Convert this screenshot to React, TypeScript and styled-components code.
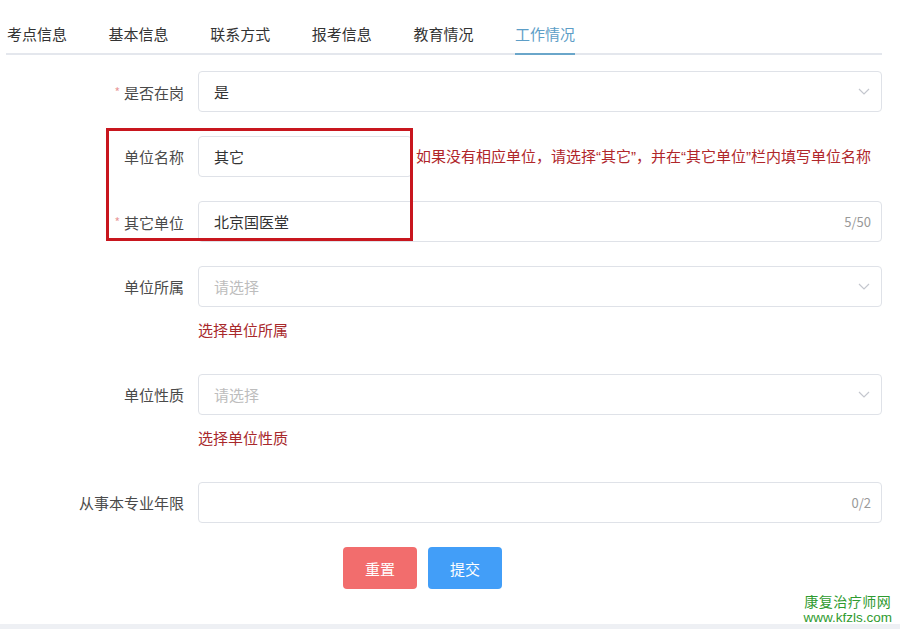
import React from 'react';
import styled, { createGlobalStyle } from 'styled-components';

const GlobalStyle = createGlobalStyle`
  html, body {
    margin: 0;
    padding: 0;
    background: #ffffff;
    font-family: "Noto Sans CJK SC", "Noto Sans", "Liberation Sans", sans-serif;
  }
`;

const Page = styled.div`
  position: relative;
  height: 629px;
  display: flex;
  flex-direction: column;
  overflow: hidden;
`;

const Main = styled.div`
  flex: 1;
  padding: 15px 18px 0 6px;
`;

const TabBar = styled.div`
  display: flex;
  border-bottom: 2px solid #e4e7ed;
`;

const Tab = styled.div`
  display: flex;
  height: 40px;
  padding: 0 20.8px;
  margin-bottom: -2px;

  &:first-child {
    padding-left: 1px;
  }
`;

const TabLabel = styled.div<{ active?: boolean }>`
  display: flex;
  align-items: center;
  padding-bottom: 2px;
  font-size: 15px;
  color: ${p => (p.active ? '#5d9ec7' : '#333')};
  border-bottom: 2px solid ${p => (p.active ? '#6aa6ca' : 'transparent')};
`;

const Form = styled.div`
  position: relative;
  margin-top: 16px;
`;

const FormItem = styled.div`
  display: flex;
  align-items: flex-start;
  margin-bottom: 24px;
`;

const Label = styled.div`
  width: 192px;
  flex-shrink: 0;
  box-sizing: border-box;
  padding-right: 14px;
  text-align: right;
  line-height: 41px;
  height: 41px;
  font-size: 15px;
  color: #4a4a4a;
`;

const Star = styled.span`
  color: #e99a9a;
  font-size: 12px;
  margin-right: 4px;
  vertical-align: 2px;
`;

const Content = styled.div`
  flex: 1;
  min-width: 0;
`;

const InlineRow = styled.div`
  display: flex;
  align-items: center;
  height: 41px;
`;

const InputBox = styled.div<{ width?: number }>`
  box-sizing: border-box;
  flex-shrink: 0;
  width: ${p => (p.width ? `${p.width}px` : '100%')};
  height: 41px;
  border: 1px solid #dfe2e8;
  border-radius: 4px;
  padding: 0 10px 0 15px;
  display: flex;
  align-items: center;
  font-size: 15px;
  color: #333;
  background: #fff;
`;

const Value = styled.span<{ placeholder?: boolean }>`
  flex: 1;
  color: ${p => (p.placeholder ? '#bdbdbd' : '#333')};
`;

const Counter = styled.span`
  font-size: 13px;
  color: #999;
`;

const Hint = styled.span`
  margin-left: 4px;
  font-size: 15px;
  line-height: 20px;
  color: #b0262a;
  white-space: nowrap;
`;

const Quote = styled.span`
  font-family: "Liberation Sans", sans-serif;
`;

const ErrorText = styled.div`
  padding: 14px 0 11px;
  line-height: 18px;
  font-size: 15px;
  color: #a8282b;
`;

const Chevron = styled.svg`
  width: 12px;
  height: 7px;
  margin-right: 1px;
`;

const ButtonRow = styled.div`
  display: flex;
  gap: 11px;
  padding-left: 337px;
`;

const Button = styled.button<{ variant: 'danger' | 'primary' }>`
  width: 74px;
  height: 42px;
  border: none;
  border-radius: 4px;
  font-family: inherit;
  font-size: 15px;
  color: #fff;
  background: ${p => (p.variant === 'danger' ? '#f26d6d' : '#429ef8')};
`;

const Highlight = styled.div`
  position: absolute;
  left: 100px;
  top: 57px;
  width: 307px;
  height: 113px;
  box-sizing: border-box;
  border: 3px solid #c8161e;
`;

const Footer = styled.div`
  height: 5px;
  background: #eef0f4;
`;

const Watermark = styled.div`
  position: absolute;
  right: 8px;
  bottom: 4px;
  display: flex;
  flex-direction: column;
  align-items: center;
  gap: 2px;
  color: #2f9b2f;
`;

const WatermarkName = styled.div`
  font-size: 14px;
  line-height: 15px;
  letter-spacing: 0.5px;
`;

const WatermarkUrl = styled.div`
  font-family: "Liberation Sans", Arial, sans-serif;
  font-size: 13.5px;
  line-height: 14px;
`;

const ArrowDown = () => (
  <Chevron viewBox="0 0 12 7">
    <polyline points="1,1 6,6 11,1" fill="none" stroke="#c4c7ce" strokeWidth="1.2" />
  </Chevron>
);

const tabs = ['考点信息', '基本信息', '联系方式', '报考信息', '教育情况', '工作情况'];

export default function App() {
  return (
    <>
      <GlobalStyle />
      <Page>
        <Main>
          <TabBar>
            {tabs.map((t, i) => (
              <Tab key={t}>
                <TabLabel active={i === tabs.length - 1}>{t}</TabLabel>
              </Tab>
            ))}
          </TabBar>

          <Form>
            <FormItem>
              <Label><Star>*</Star>是否在岗</Label>
              <Content>
                <InputBox>
                  <Value>是</Value>
                  <ArrowDown />
                </InputBox>
              </Content>
            </FormItem>

            <FormItem>
              <Label>单位名称</Label>
              <Content>
                <InlineRow>
                  <InputBox width={214}>
                    <Value>其它</Value>
                  </InputBox>
                  <Hint>
                    如果没有相应单位，请选择<Quote>“</Quote>其它<Quote>”</Quote>，并在<Quote>“</Quote>其它单位<Quote>”</Quote>栏内填写单位名称
                  </Hint>
                </InlineRow>
              </Content>
            </FormItem>

            <FormItem>
              <Label><Star>*</Star>其它单位</Label>
              <Content>
                <InputBox>
                  <Value>北京国医堂</Value>
                  <Counter>5/50</Counter>
                </InputBox>
              </Content>
            </FormItem>

            <FormItem>
              <Label>单位所属</Label>
              <Content>
                <InputBox>
                  <Value placeholder>请选择</Value>
                  <ArrowDown />
                </InputBox>
                <ErrorText>选择单位所属</ErrorText>
              </Content>
            </FormItem>

            <FormItem>
              <Label>单位性质</Label>
              <Content>
                <InputBox>
                  <Value placeholder>请选择</Value>
                  <ArrowDown />
                </InputBox>
                <ErrorText>选择单位性质</ErrorText>
              </Content>
            </FormItem>

            <FormItem>
              <Label>从事本专业年限</Label>
              <Content>
                <InputBox>
                  <Value />
                  <Counter>0/2</Counter>
                </InputBox>
              </Content>
            </FormItem>

            <ButtonRow>
              <Button variant="danger">重置</Button>
              <Button variant="primary">提交</Button>
            </ButtonRow>

            <Highlight />
          </Form>
        </Main>
        <Footer />
        <Watermark>
          <WatermarkName>康复治疗师网</WatermarkName>
          <WatermarkUrl>www.kfzls.com</WatermarkUrl>
        </Watermark>
      </Page>
    </>
  );
}
